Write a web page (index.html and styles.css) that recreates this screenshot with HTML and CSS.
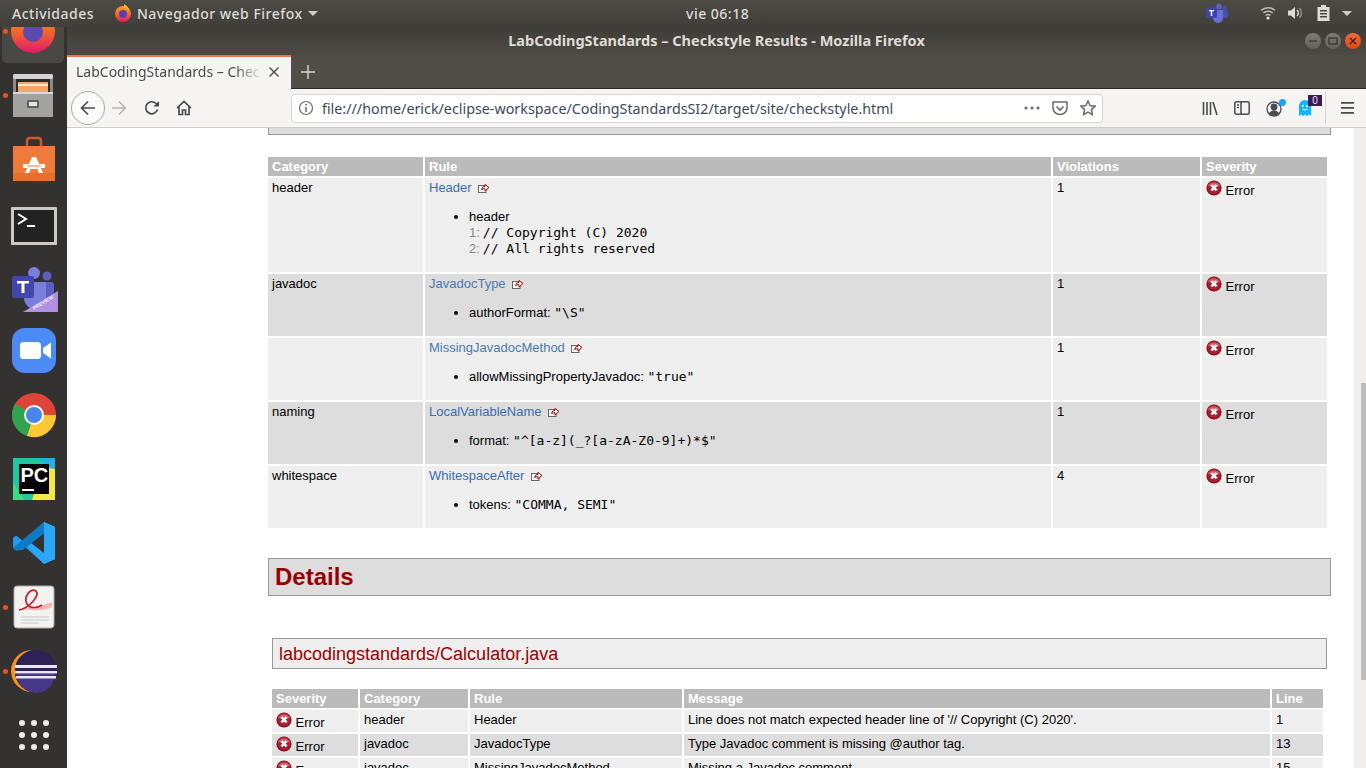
FILE: index.html
```html
<!DOCTYPE html>
<html lang="es">
<head>
    <meta charset="UTF-8">
    <title>LabCodingStandards – Checkstyle Results</title>
    <link rel="stylesheet" href="styles.css">
</head>
<body>
    <svg class="defs" width="0" height="0">
        <defs>
            <linearGradient id="foxring" x1="0" y1="0" x2="0" y2="1">
                <stop offset="0" stop-color="#f9a11e"/>
                <stop offset=".55" stop-color="#f2632c"/>
                <stop offset="1" stop-color="#e4166f"/>
            </linearGradient>
        </defs>
        <symbol id="err" viewBox="0 0 16 16">
            <circle cx="8" cy="8" r="7.6" fill="#7c1222"/>
            <circle cx="8" cy="7.6" r="6.6" fill="#b01c30"/>
            <path d="M2 6a6.5 6 0 0 1 12 0q-6 2-12 0z" fill="#cf5a68"/>
            <path d="M5.4 5l5.2 5.4M10.6 5l-5.2 5.4" stroke="#fff" stroke-width="2.5"/>
        </symbol>
        <symbol id="ext" viewBox="0 0 12 12">
            <rect x="0.5" y="3.5" width="7.5" height="7" fill="#fff" stroke="#666"/>
            <path d="M3.5 7.5q.5-3 3.5-3.200V2.500L11 5.500 7 9V6.800Q5 6.500 3.500 7.500z" fill="#fff" stroke="#900"/>
        </symbol>
    </svg>

    <header class="topbar">
        <span class="top-activities">Actividades</span>
        <span class="top-app">
            <svg width="20" height="20" viewBox="0 0 20 20"><circle cx="10" cy="11" r="8" fill="url(#foxring)"/><path d="M11 1q4 2 6 7-3-3-6-3z" fill="#fcb52c"/><circle cx="10" cy="11" r="4" fill="#5b3fb0"/></svg>
            Navegador web Firefox
            <i class="caret"></i>
        </span>
        <span class="top-clock">vie 06:18</span>
        <span class="top-tray">
            <svg class="tray-teams" width="24" height="20" viewBox="0 0 24 20"><circle cx="14" cy="3.500" r="3" fill="#5a5fc0"/><circle cx="20" cy="5" r="2.200" fill="#4a4fa8"/><rect x="10" y="7" width="13" height="8" rx="2" fill="#4a4fa8"/><path d="M8 7h10v8a5 5 0 0 1-10 0z" fill="#6a6fd8"/><rect x="1" y="4" width="11" height="11" rx="1.500" fill="#3f44a8"/><path d="M4 7h5v1.200H7.200V13H5.800V8.200H4z" fill="#fff"/></svg>
            <svg class="tray-wifi" width="16" height="14" viewBox="0 0 16 14" fill="none" stroke="#bdbbb5" stroke-width="1.500"><path d="M1 4.500a10 10 0 0 1 14 0M3.300 7a7 7 0 0 1 9.400 0M5.500 9.500a3.800 3.800 0 0 1 5 0"/><circle cx="8" cy="12" r="1.600" fill="#e6e4df" stroke="none"/></svg>
            <svg class="tray-vol" width="16" height="14" viewBox="0 0 16 14" fill="none"><path d="M1 4.500h3L8 1v12L4 9.500H1z" fill="#dedcd7"/><path d="M10 4a4 4 0 0 1 0 6" stroke="#dedcd7" stroke-width="1.400"/><path d="M12.500 2a7.500 7.500 0 0 1 0 10" stroke="#96948e" stroke-width="1.400"/></svg>
            <svg class="tray-bat" width="13" height="16" viewBox="0 0 13 16"><path d="M4 0h5v2h3.500v14H.5V2H4z" fill="#dedcd7"/><path d="M3 5h7v1.500H3zM3 8h7v1.500H3zM3 11h7v1.500H3z" fill="#48463f"/></svg>
            <i class="caret"></i>
        </span>
    </header>

    <div class="desktop">
        <nav class="dock">
            <div class="slot slot-active"><i class="run-dot"></i>
                <svg width="48" height="48" viewBox="0 0 48 48"><circle cx="24" cy="24" r="22" fill="url(#foxring)"/><circle cx="24" cy="25" r="10" fill="#5d4ab0"/></svg>
            </div>
            <div class="slot"><i class="run-dot"></i>
                <svg width="48" height="48" viewBox="0 0 48 48"><rect x="3" y="3" width="40" height="43" rx="2" fill="#8a8a88"/><rect x="3" y="3" width="40" height="5" rx="2" fill="#d5d5d3"/><rect x="6" y="8" width="34" height="13" fill="#2d2a28"/><rect x="8" y="11" width="30" height="10" fill="#f4a662"/><rect x="8" y="13" width="30" height="2" fill="#fde7c8"/><path d="M3 21h40v25H3z" fill="#a2a2a0"/><rect x="3" y="21" width="40" height="2" fill="#d8d8d6"/><rect x="17" y="29" width="12" height="8" rx="1.500" fill="#5f5f5d"/><rect x="19" y="31" width="8" height="4" fill="#e6e6e4"/></svg>
            </div>
            <div class="slot">
                <svg width="48" height="48" viewBox="0 0 48 48"><path d="M17 11V6q0-3 3-3h8q3 0 3 3v5" fill="none" stroke="#cc5a28" stroke-width="2.500"/><path d="M3 11h42v35H3z" fill="#ee7b3a"/><path d="M3 38h42v8H3z" fill="#e8702e"/><path d="M22 22h4l7 16h-4l-1.500-4h-7L19 38h-4z" fill="#fff"/><path d="M13 29h22v4H13z" fill="#fff"/><path d="M17 30.500h14v1H17z" fill="#ee7b3a"/></svg>
            </div>
            <div class="slot slot-term">
                <svg width="48" height="48" viewBox="0 0 48 48"><rect x="1" y="5" width="46" height="38" rx="1" fill="#c9c9c7"/><rect x="4" y="8" width="40" height="32" fill="#222"/><path d="M8 12l8 5-8 5" fill="none" stroke="#fff" stroke-width="2"/><path d="M17 23h8v2h-8z" fill="#fff"/></svg>
            </div>
            <div class="slot slot-teams">
                <svg width="48" height="48" viewBox="0 0 48 48"><circle cx="24" cy="7" r="6" fill="#7b7fdc"/><circle cx="37" cy="10" r="4.500" fill="#5a5fc0"/><rect x="28" y="16" width="16" height="18" rx="3" fill="#5a5fc0"/><path d="M14 16h22v16a11 11 0 0 1-22 0z" fill="#7b7fdc"/><rect x="2" y="10" width="22" height="22" rx="2" fill="#4347ac"/><path d="M7 15h12v2.500h-4.500V27h-3v-9.500H7z" fill="#fff"/><path d="M13 46l35-21v21z" fill="#b291e0"/><text class="preview" x="24" y="44" transform="rotate(-31 24 44)">PREVIEW</text></svg>
            </div>
            <div class="slot">
                <svg width="48" height="48" viewBox="0 0 48 48"><rect x="2" y="1" width="44" height="45" rx="13" fill="#4c8bf5"/><rect x="10" y="15" width="21" height="17" rx="3.500" fill="#fff"/><path d="M33 21l8-5.500v16L33 26z" fill="#fff"/></svg>
            </div>
            <div class="slot">
                <svg width="48" height="48" viewBox="0 0 48 48"><circle cx="24" cy="24" r="22" fill="#de4437"/><path d="M24 24L5 13A22 22 0 0 0 17 45z" fill="#2ea44f"/><path d="M24 24h22a22 22 0 0 1-29 21z" fill="#fcc934"/><circle cx="24" cy="24" r="10" fill="#fff"/><circle cx="24" cy="24" r="8" fill="#4a86e8"/></svg>
            </div>
            <div class="slot">
                <svg width="48" height="48" viewBox="0 0 48 48"><rect x="3" y="3" width="42" height="42" fill="#21c7a0"/><path d="M26 3h19v12z" fill="#1db3e8"/><path d="M33 12l12 2v31H22z" fill="#f5e843"/><path d="M3 28l12 17H3z" fill="#3ddc84"/><rect x="9" y="9" width="30" height="30" fill="#000"/><text class="pc" x="10.500" y="27">PC</text><rect x="12" y="34" width="12" height="2" fill="#fff"/></svg>
            </div>
            <div class="slot">
                <svg width="48" height="48" viewBox="0 0 48 48"><path d="M34 3l11 5v32l-11 5-21-19L6 31.500 3 29V19l3-2.500 7 5.500z" fill="#1f9cf0"/><path d="M34 3L15 24l19 21 11-5V8z" fill="#2aa7f5"/><path d="M34 14L21 24l13 10z" fill="#333230"/><path d="M34 3v11L13 31l-7 .500-3-2.500z" fill="#0f79c4"/></svg>
            </div>
            <div class="slot"><i class="run-dot"></i>
                <svg width="48" height="48" viewBox="0 0 48 48"><rect x="4" y="3" width="40" height="42" rx="3" fill="#f2f2f0" stroke="#aaa"/><path d="M10 25q12 2 32-6v5q-12 6-32 1z" fill="#f1b5b5"/><path d="M9 27C20 25 30 12 26 8 21 4 13 14 17 21c3 5 11 4 15 1" fill="none" stroke="#c8202a" stroke-width="1.700"/><path d="M11 34h28M11 37h28M11 40h18" stroke="#c8c8c6"/></svg>
            </div>
            <div class="slot"><i class="run-dot"></i>
                <svg width="48" height="48" viewBox="0 0 48 48"><path d="M22 3a21 21 0 1 0 0 42q-17-5-17-21T22 3z" fill="#f7941e"/><circle cx="26" cy="24" r="21" fill="#2c2255"/><path d="M7 27h38a19 19 0 0 1-38 0z" fill="#473788"/><path d="M5 18h42v3H5zM5 24h42v2.500H5zM6 29h40v2.500H6z" fill="#e8e6f2"/></svg>
            </div>
            <div class="slot">
                <svg width="48" height="48" viewBox="0 0 48 48" fill="#eee"><circle cx="12" cy="12" r="3"/><circle cx="24" cy="12" r="3"/><circle cx="36" cy="12" r="3"/><circle cx="12" cy="24" r="3"/><circle cx="24" cy="24" r="3"/><circle cx="36" cy="24" r="3"/><circle cx="12" cy="36" r="3"/><circle cx="24" cy="36" r="3"/><circle cx="36" cy="36" r="3"/></svg>
            </div>
        </nav>

        <main class="window">
            <div class="titlebar">
                <span></span>
                <span class="title">LabCodingStandards – Checkstyle Results - Mozilla Firefox</span>
                <span class="win-buttons">
                    <i class="win-btn"><svg width="10" height="10" viewBox="0 0 10 10"><path d="M1 5h8" stroke="#333" stroke-width="1.200"/></svg></i>
                    <i class="win-btn"><svg width="10" height="10" viewBox="0 0 10 10"><rect x="1" y="2" width="8" height="6" fill="none" stroke="#333" stroke-width="1.200"/></svg></i>
                    <i class="win-btn win-close"><svg width="10" height="10" viewBox="0 0 10 10"><path d="M2 2l6 6M8 2l-6 6" stroke="#3a1a0c" stroke-width="1.200"/></svg></i>
                </span>
            </div>

            <div class="tabbar">
                <div class="tab">
                    <span class="tab-label">LabCodingStandards – Chec</span>
                    <svg width="12" height="12" viewBox="0 0 12 12"><path d="M1.500 1.500l9 9M10.500 1.500l-9 9" stroke="#4a4a4f" stroke-width="1.400"/></svg>
                </div>
                <svg class="new-tab" width="14" height="14" viewBox="0 0 14 14"><path d="M7 0v14M0 7h14" stroke="#d8d6d0" stroke-width="1.400"/></svg>
            </div>

            <div class="toolbar">
                <span class="back-btn"><svg width="16" height="16" viewBox="0 0 16 16" fill="none" stroke="#4a4a4f" stroke-width="1.700"><path d="M15 8H1.500M8 1.500L1.500 8 8 14.500"/></svg></span>
                <svg class="tool-fwd" width="16" height="16" viewBox="0 0 16 16" fill="none" stroke="#b5b5b5" stroke-width="1.500"><path d="M1 8h13.500M8 1.500L14.500 8 8 14.500"/></svg>
                <svg class="tool-reload" width="16" height="16" viewBox="0 0 16 16" fill="none" stroke="#4a4a4f" stroke-width="1.700"><path d="M13.500 9.500A6 6 0 1 1 12 3.500l2 2"/><path d="M15 1v5.500H9.500z" fill="#4a4a4f" stroke="none"/></svg>
                <svg class="tool-home" width="16" height="16" viewBox="0 0 16 16" fill="none" stroke="#4a4a4f" stroke-width="1.700"><path d="M1 8l7-6.500L15 8M3 6.500V14.500h3.500V10h3v4.500H13V6.500"/></svg>

                <div class="urlbar">
                    <svg width="16" height="16" viewBox="0 0 16 16" fill="none" stroke="#6a6a6f" stroke-width="1.200"><circle cx="8" cy="8" r="6.500"/><path d="M8 7v5" stroke-width="1.500"/><circle cx="8" cy="4.700" r=".9" fill="#6a6a6f" stroke="none"/></svg>
                    <span class="url">file:///home/erick/eclipse-workspace/CodingStandardsSI2/target/site/checkstyle.html</span>
                    <svg class="url-dots" width="16" height="4" viewBox="0 0 16 4" fill="#6a6a6f"><circle cx="2" cy="2" r="1.600"/><circle cx="8" cy="2" r="1.600"/><circle cx="14" cy="2" r="1.600"/></svg>
                    <svg class="url-pocket" width="16" height="16" viewBox="0 0 16 16" fill="none" stroke="#6a6a6f" stroke-width="1.500"><path d="M1 2h14v6a7 6.500 0 0 1-14 0z"/><path d="M4.500 6.500L8 10l3.500-3.500" stroke-width="1.700"/></svg>
                    <svg class="url-star" width="16" height="16" viewBox="0 0 16 16" fill="none" stroke="#6a6a6f" stroke-width="1.500"><path d="M8 1l2.100 4.600 5 .6-3.700 3.400 1 5L8 12.100l-4.400 2.500 1-5L.9 6.200l5-.6z"/></svg>
                </div>

                <svg class="tool-lib" width="16" height="16" viewBox="0 0 16 16" stroke="#4a4a4f" stroke-width="1.600" fill="none"><path d="M1.500 2v13M5 2v13M8.500 2v13M11 2l4 13"/></svg>
                <svg class="tool-side" width="16" height="14" viewBox="0 0 16 14" stroke="#4a4a4f" stroke-width="1.500" fill="none"><rect x=".8" y=".8" width="14.400" height="12.400" rx="2"/><path d="M7 1v12M3 4h2M3 6.500h2"/></svg>
                <span class="tool-account">
                    <svg width="17" height="17" viewBox="0 0 17 17" fill="none" stroke="#4a4a4f" stroke-width="1.300"><circle cx="8" cy="9" r="7"/><circle cx="8" cy="7" r="2.800" fill="#4a4a4f"/><path d="M3.500 13.500q4.500-5 9 0-4.500 3-9 0z" fill="#4a4a4f"/></svg>
                    <i class="account-dot"></i>
                </span>
                <span class="tool-ghost">
                    <svg width="14" height="17" viewBox="0 0 14 17"><path d="M1 16V6a6 6 0 0 1 12 0v10l-2-1.500L9 16l-2-1.500L5 16l-2-1.500z" fill="#12b5ff"/><circle cx="5" cy="6" r="1" fill="#fff"/><circle cx="9" cy="6" r="1" fill="#fff"/><path d="M4.500 9q2.500 2 5 0" stroke="#fff" fill="none"/></svg>
                    <b class="ghost-badge">0</b>
                </span>
                <i class="tool-sep"></i>
                <svg class="tool-menu" width="13" height="12" viewBox="0 0 13 12" fill="#4a4a4f"><path d="M0 0h13v1.700H0zM0 5h13v1.700H0zM0 10h13v1.700H0z"/></svg>
            </div>

            <div class="viewport">
                <div class="page">
                    <div class="section-end"></div>

                    <table class="rules">
                        <thead>
                            <tr><th>Category</th><th>Rule</th><th>Violations</th><th>Severity</th></tr>
                        </thead>
                        <tbody>
                            <tr class="a">
                                <td>header</td>
                                <td>
                                    <a href="#">Header</a> <svg class="ext"><use href="#ext"/></svg>
                                    <ul>
                                        <li>header<br><span class="ln">1:</span><code>// Copyright (C) 2020</code><br><span class="ln">2:</span><code>// All rights reserved</code></li>
                                    </ul>
                                </td>
                                <td>1</td>
                                <td><svg class="err"><use href="#err"/></svg> Error</td>
                            </tr>
                            <tr class="b">
                                <td>javadoc</td>
                                <td>
                                    <a class="seen" href="#">JavadocType</a> <svg class="ext"><use href="#ext"/></svg>
                                    <ul><li>authorFormat: <code>"\S"</code></li></ul>
                                </td>
                                <td>1</td>
                                <td><svg class="err"><use href="#err"/></svg> Error</td>
                            </tr>
                            <tr class="a">
                                <td></td>
                                <td>
                                    <a class="seen" href="#">MissingJavadocMethod</a> <svg class="ext"><use href="#ext"/></svg>
                                    <ul><li>allowMissingPropertyJavadoc: <code>"true"</code></li></ul>
                                </td>
                                <td>1</td>
                                <td><svg class="err"><use href="#err"/></svg> Error</td>
                            </tr>
                            <tr class="b">
                                <td>naming</td>
                                <td>
                                    <a href="#">LocalVariableName</a> <svg class="ext"><use href="#ext"/></svg>
                                    <ul><li>format: <code>"^[a-z](_?[a-zA-Z0-9]+)*$"</code></li></ul>
                                </td>
                                <td>1</td>
                                <td><svg class="err"><use href="#err"/></svg> Error</td>
                            </tr>
                            <tr class="a">
                                <td>whitespace</td>
                                <td>
                                    <a href="#">WhitespaceAfter</a> <svg class="ext"><use href="#ext"/></svg>
                                    <ul><li>tokens: <code>"COMMA, SEMI"</code></li></ul>
                                </td>
                                <td>4</td>
                                <td><svg class="err"><use href="#err"/></svg> Error</td>
                            </tr>
                        </tbody>
                    </table>

                    <h2 class="details-head">Details</h2>
                    <h3 class="file-head">labcodingstandards/Calculator.java</h3>

                    <table class="file-table">
                        <thead>
                            <tr><th>Severity</th><th>Category</th><th>Rule</th><th>Message</th><th>Line</th></tr>
                        </thead>
                        <tbody>
                            <tr class="a">
                                <td><svg class="err"><use href="#err"/></svg> Error</td>
                                <td>header</td><td>Header</td>
                                <td>Line does not match expected header line of '// Copyright (C) 2020'.</td>
                                <td>1</td>
                            </tr>
                            <tr class="b">
                                <td><svg class="err"><use href="#err"/></svg> Error</td>
                                <td>javadoc</td><td>JavadocType</td>
                                <td>Type Javadoc comment is missing @author tag.</td>
                                <td>13</td>
                            </tr>
                            <tr class="a">
                                <td><svg class="err"><use href="#err"/></svg> Error</td>
                                <td>javadoc</td><td>MissingJavadocMethod</td>
                                <td>Missing a Javadoc comment.</td>
                                <td>15</td>
                            </tr>
                        </tbody>
                    </table>
                </div>
                <div class="scrollbar"><div class="thumb"></div></div>
            </div>
        </main>
    </div>
</body>
</html>
```

FILE: styles.css
```css
* {
    box-sizing: border-box;
}

html, body {
    margin: 0;
    height: 768px;
    overflow: hidden;
}

body {
    font-family: "Liberation Sans", Arial, sans-serif;
    display: flex;
    flex-direction: column;
    background-color: #333230;
}

.defs {
    display: block;
    height: 0;
}

/* gnome top bar */
.topbar {
    height: 27px;
    flex: none;
    display: flex;
    align-items: center;
    padding-bottom: 1px;
    background: linear-gradient(to bottom, #4d4b45, #3f3e39);
    color: #dfdcd5;
    font-family: "Noto Sans", sans-serif;
    font-size: 14px;
    font-weight: 500;
    letter-spacing: .5px;
    position: relative;
    z-index: 2;
}

.top-activities {
    margin-left: 12px;
    width: 101px;
}

.top-app {
    width: 573px;
    display: flex;
    align-items: center;
    gap: 4px;
    white-space: nowrap;
}

.top-clock {
    width: 61px;
    white-space: nowrap;
}

.top-tray {
    margin-left: auto;
    display: flex;
    align-items: center;
    padding-right: 14px;
}

.tray-teams { margin-right: 31px; }
.tray-wifi { margin-right: 11px; }
.tray-vol { margin-right: 14px; }
.tray-bat { margin-right: 11px; }

.caret {
    width: 0;
    height: 0;
    margin-left: 1px;
    border-left: 5px solid transparent;
    border-right: 5px solid transparent;
    border-top: 5px solid #cfccc5;
}

.desktop {
    flex: 1;
    display: flex;
    min-height: 0;
}

/* ubuntu dock */
.dock {
    width: 67px;
    flex: none;
    overflow: hidden;
    background-color: #333230;
}

.slot {
    height: 64px;
    display: flex;
    align-items: center;
    justify-content: center;
    position: relative;
}

.slot:first-child {
    margin-top: -28px;
}

.slot-active {
    background-color: #494845;
    border-radius: 5px;
    margin-left: 2px;
    margin-right: 3px;
}

.slot-term svg { margin-top: 6px; }
.slot-teams svg { margin-top: 6px; }

.run-dot {
    position: absolute;
    left: 3px;
    top: 30px;
    width: 5px;
    height: 5px;
    border-radius: 50%;
    background-color: #e95420;
}

.slot-active .run-dot {
    left: 1px;
}

.preview {
    font-family: "Liberation Sans", sans-serif;
    font-size: 5px;
    font-weight: bold;
    fill: #f1ecfa;
}

.pc {
    font-family: "Liberation Sans", sans-serif;
    font-size: 20px;
    font-weight: bold;
    fill: #fff;
}

/* firefox window */
.window {
    flex: 1;
    min-width: 0;
    display: flex;
    flex-direction: column;
}

.titlebar {
    height: 28px;
    flex: none;
    display: grid;
    grid-template-columns: 1fr auto 1fr;
    align-items: center;
    background: linear-gradient(to bottom, #3e3d38, #4c4a44);
    color: #dfdcd5;
    font-family: "Noto Sans", sans-serif;
    font-size: 14.5px;
    font-weight: 700;
}

.title {
    padding-bottom: 2px;
}

.win-buttons {
    justify-self: end;
    display: flex;
    gap: 4px;
    padding-right: 5px;
}

.win-btn {
    width: 16px;
    height: 16px;
    border-radius: 50%;
    background: linear-gradient(to bottom, #7d7b75, #63615b);
    display: flex;
    align-items: center;
    justify-content: center;
}

.win-close {
    background: linear-gradient(to bottom, #f0693a, #dd4814);
}

.tabbar {
    height: 34px;
    flex: none;
    display: flex;
    align-items: center;
    background-color: #504e47;
    box-shadow: inset 0 -1px #2b2a27;
}

.tab {
    width: 224px;
    height: 34px;
    display: flex;
    align-items: center;
    padding: 0 11px 3px 9px;
    background-color: #f5f4f2;
    border-top: 2px solid #f0724a;
    color: #4a4a4f;
    font-family: "Noto Sans", sans-serif;
    font-size: 14px;
}

.tab-label {
    flex: 1;
    overflow: hidden;
    white-space: nowrap;
    -webkit-mask-image: linear-gradient(to right, #000 85%, transparent);
    mask-image: linear-gradient(to right, #000 85%, transparent);
    margin-right: 5px;
}

.new-tab {
    margin-left: 10px;
}

.toolbar {
    height: 39px;
    flex: none;
    display: flex;
    align-items: center;
    background-color: #f5f4f2;
    border-bottom: 1px solid #cfcdc9;
}

.back-btn {
    width: 34px;
    height: 34px;
    margin-left: 4px;
    border: 1px solid #a9a9a9;
    border-radius: 50%;
    background-color: #fbfbfb;
    display: flex;
    align-items: center;
    justify-content: center;
}

.tool-fwd { margin-left: 6px; }
.tool-reload { margin-left: 17px; }
.tool-home { margin-left: 16px; }

.urlbar {
    width: 812px;
    height: 29px;
    margin-left: 99px;
    padding: 0 6px;
    display: flex;
    align-items: center;
    background-color: #fff;
    border: 1px solid #d7d5d1;
    border-radius: 4px;
}

.url {
    margin-left: 8px;
    color: #3e4a58;
    font-family: "Noto Sans", sans-serif;
    font-size: 14.3px;
    white-space: nowrap;
    flex: 1;
}

.url-dots { margin-right: 12px; }
.url-pocket { margin-right: 12px; }

.tool-lib { margin-left: 99px; }
.tool-side { margin-left: 16px; }

.tool-account {
    position: relative;
    margin-left: 16px;
    display: flex;
}

.account-dot {
    position: absolute;
    right: -3px;
    top: -1px;
    width: 7px;
    height: 7px;
    border-radius: 50%;
    background-color: #1ca3f0;
}

.tool-ghost {
    position: relative;
    margin-left: 15px;
    display: flex;
}

.ghost-badge {
    position: absolute;
    left: 10px;
    top: -5px;
    width: 14px;
    height: 11px;
    background-color: #3a1a52;
    color: #ebe4f2;
    font-size: 10px;
    font-weight: normal;
    line-height: 11px;
    text-align: center;
}

.tool-sep {
    width: 1px;
    height: 32px;
    margin-left: 13px;
    background-color: #d7d5d1;
}

.tool-menu {
    margin-left: 15px;
}

/* page */
.viewport {
    flex: 1;
    min-height: 0;
    display: flex;
    background-color: #fff;
}

.page {
    flex: 1;
    min-width: 0;
    overflow: hidden;
    font-size: 13px;
    line-height: 16px;
    color: #000;
}

.section-end {
    height: 7px;
    margin: 0 23px 0 201px;
    background-color: #ddd;
    border: 1px solid #999;
    border-top: none;
}

.page table {
    table-layout: fixed;
    border-spacing: 2px;
    border-collapse: separate;
}

.page th {
    padding: 2px 4px 1px;
    background-color: #bbb;
    color: #fff;
    text-align: left;
    font-weight: bold;
}

.page td {
    padding: 2px 4px 3px;
    vertical-align: top;
}

tr.a td { background-color: #eee; }
tr.b td { background-color: #ddd; }

.rules {
    width: 1063px;
    margin: 20px 0 0 199px;
}

.rules th:nth-child(1) { width: 155px; }
.rules th:nth-child(2) { width: 626px; }
.rules th:nth-child(3) { width: 147px; }

.rules a {
    color: #3a6cb0;
    text-decoration: none;
}

.rules a.seen {
    color: #4a7ab0;
}

.rules ul {
    margin: 13px 0 12px;
    padding-left: 40px;
}

.rules code {
    font-family: "DejaVu Sans Mono", monospace;
    font-size: 13px;
}

.ln {
    color: #888;
    margin-right: 3px;
}

.ext {
    width: 12px;
    height: 12px;
    margin-left: 3px;
    vertical-align: -2px;
}

.err {
    width: 16px;
    height: 16px;
    vertical-align: -1px;
}

.details-head {
    height: 38px;
    margin: 28px 23px 0 201px;
    padding-left: 6px;
    background-color: #ddd;
    border: 1px solid #999;
    color: #900;
    font-size: 24px;
    line-height: 36px;
    font-weight: bold;
}

.file-head {
    height: 31px;
    margin: 42px 27px 0 205px;
    padding-left: 6px;
    background-color: #eee;
    border: 1px solid #999;
    color: #900;
    font-size: 18px;
    line-height: 30px;
    font-weight: normal;
}

.file-table {
    width: 1055px;
    margin: 18px 0 0 203px;
}

.file-table th:nth-child(1) { width: 86px; }
.file-table th:nth-child(2) { width: 108px; }
.file-table th:nth-child(3) { width: 212px; }
.file-table th:nth-child(5) { width: 51px; }

.file-table td {
    padding-bottom: 1px;
}

.scrollbar {
    width: 12px;
    flex: none;
    background-color: #f0efed;
    position: relative;
}

.thumb {
    position: absolute;
    right: 0;
    top: 255px;
    width: 5px;
    height: 297px;
    background-color: #bdbdbd;
}
```
